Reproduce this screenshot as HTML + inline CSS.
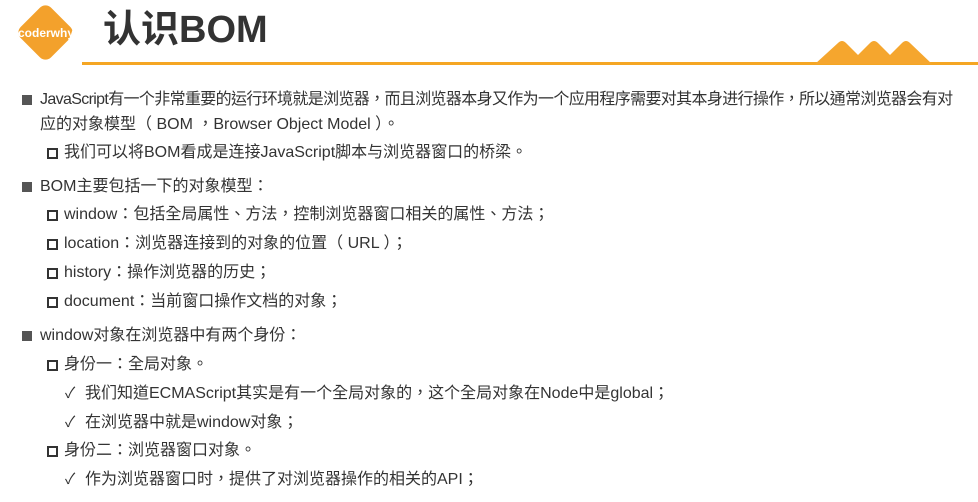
<!DOCTYPE html>
<html><head><meta charset="utf-8"><style>
body{margin:0;width:978px;height:502px;background:#fff;position:relative;overflow:hidden;font-family:"Liberation Sans","Noto Sans CJK TC",sans-serif;color:#333}
.t{position:absolute;font-size:16px;line-height:20px;white-space:nowrap;color:#333}
.b1{position:absolute;width:10px;height:10px;background:#555}
.b2{position:absolute;border:2px solid #333;box-sizing:border-box;width:11px;height:11px}
.ck{position:absolute;font-size:15px;line-height:20px;color:#333}
</style></head><body>
<div style="position:absolute;left:24px;top:11px;width:43px;height:43px;background:#f3a12c;border-radius:8px;transform:rotate(45deg)"></div>
<div style="position:absolute;left:9px;top:26px;width:74px;text-align:center;color:#fff;font-weight:bold;font-size:12px">coderwhy</div>
<div style="position:absolute;left:103px;top:7px;font-size:38px;font-weight:bold;color:#333;line-height:46px;font-family:'Liberation Sans','Noto Sans CJK SC',sans-serif">认识BOM</div>
<div style="position:absolute;left:82px;top:62px;width:896px;height:3px;background:#f5a623"></div>
<svg style="position:absolute;left:810px;top:38px" width="130" height="26"><path d="M5 26 L28 5 Q32 1 36 5 L48 17 L60 5 Q64 1 68 5 L80 17 L92 5 Q96 1 100 5 L122 26Z" fill="#f5a62e"/></svg>

<div class="b1" style="left:22px;top:95px"></div><div class="t" style="left:40px;top:90px;letter-spacing:-0.65px">JavaScript有一个非常重要的运行环境就是浏览器，而且浏览器本身又作为一个应用程序需要对其本身进行操作，所以通常浏览器会有对</div>
<div class="t" style="left:40px;top:115px">应的对象模型（ BOM ，Browser Object Model ）。</div>
<div class="b2" style="left:47px;top:148px"></div><div class="t" style="left:64px;top:143px">我们可以将BOM看成是连接JavaScript脚本与浏览器窗口的桥梁。</div>
<div class="b1" style="left:22px;top:182px"></div><div class="t" style="left:40px;top:177px">BOM主要包括一下的对象模型：</div>
<div class="b2" style="left:47px;top:210px"></div><div class="t" style="left:64px;top:205px">window：包括全局属性、方法，控制浏览器窗口相关的属性、方法；</div>
<div class="b2" style="left:47px;top:239px"></div><div class="t" style="left:64px;top:234px">location：浏览器连接到的对象的位置（ URL ）；</div>
<div class="b2" style="left:47px;top:268px"></div><div class="t" style="left:64px;top:263px">history：操作浏览器的历史；</div>
<div class="b2" style="left:47px;top:297px"></div><div class="t" style="left:64px;top:292px">document：当前窗口操作文档的对象；</div>
<div class="b1" style="left:22px;top:331px"></div><div class="t" style="left:40px;top:326px">window对象在浏览器中有两个身份：</div>
<div class="b2" style="left:47px;top:360px"></div><div class="t" style="left:64px;top:355px">身份一：全局对象。</div>
<div class="ck" style="left:65px;top:384px">✓</div><div class="t" style="left:85px;top:384px">我们知道ECMAScript其实是有一个全局对象的，这个全局对象在Node中是global；</div>
<div class="ck" style="left:65px;top:413px">✓</div><div class="t" style="left:85px;top:413px">在浏览器中就是window对象；</div>
<div class="b2" style="left:47px;top:446px"></div><div class="t" style="left:64px;top:441px">身份二：浏览器窗口对象。</div>
<div class="ck" style="left:65px;top:470px">✓</div><div class="t" style="left:85px;top:470px">作为浏览器窗口时，提供了对浏览器操作的相关的API；</div>
</body></html>
